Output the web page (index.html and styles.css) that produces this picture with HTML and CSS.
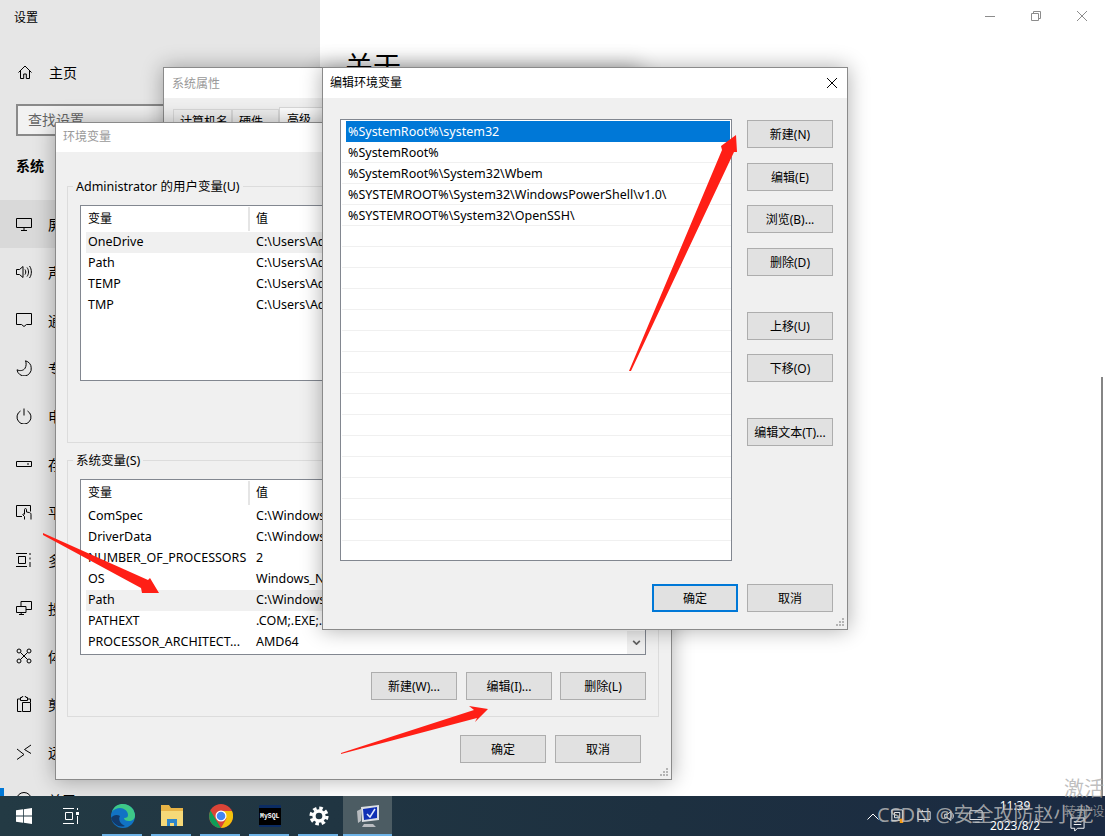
FILE: index.html
```html
<!DOCTYPE html>
<html lang="zh-CN">
<head>
    <meta charset="UTF-8">
    <title>设置</title>
    <link rel="stylesheet" href="styles.css">
</head>
<body>
<div class="screen">
    <div class="settings">
        <aside class="sidebar">
            <div class="app-title">设置</div>
            <div class="home-row">
                <svg class="icon" viewBox="0 0 16 16"><path d="M1.5 8.5 8 2l6.5 6.5M3.5 7v7.5h3.2v-4.5h2.6v4.5h3.2V7"/></svg>
                <span>主页</span>
            </div>
            <div class="search">查找设置</div>
            <div class="section">系统</div>
            <ul class="nav">
                <li class="nav-item hover">
                    <svg class="icon" viewBox="0 0 16 16"><path d="M.5 2.5h15v9H.5zM8 11.5v3M5 14.5h6"/></svg>
                    <span>屏幕</span>
                </li>
                <li class="nav-item">
                    <svg class="icon" viewBox="0 0 16 16"><path d="M.5 5.5h3L7 2.5v11l-3.500-3h-3zM9 5.500c1 1.500 1 3.500 0 5M11 3.500c2 2.500 2 6.500 0 9M13.500 2c2.500 3.500 2.500 8.500 0 12"/></svg>
                    <span>声音</span>
                </li>
                <li class="nav-item">
                    <svg class="icon" viewBox="0 0 16 16"><path d="M.5 1.500h15v11h-5l-2.500 2-2.500-2h-5z"/></svg>
                    <span>通知和操作</span>
                </li>
                <li class="nav-item">
                    <svg class="icon" viewBox="0 0 16 16"><path d="M9.500 .8c3.500 1 5.700 3.700 5.700 7a7 7 0 0 1-14.200 2c3 1.500 6.500 .8 8-1.500 1.300-2.200 1.500-5 .5-7.500z"/></svg>
                    <span>专注助手</span>
                </li>
                <li class="nav-item">
                    <svg class="icon" viewBox="0 0 16 16"><path d="M4.500 3a7 7 0 1 0 7 0M8 .5v7"/></svg>
                    <span>电源和睡眠</span>
                </li>
                <li class="nav-item">
                    <svg class="icon" viewBox="0 0 16 16"><path d="M.5 5.500h15v5H.5zM11 8h2"/></svg>
                    <span>存储</span>
                </li>
                <li class="nav-item">
                    <svg class="icon" viewBox="0 0 16 16"><path d="M6 12.500H.5v-11h14v6M8.500 15.500v-3L7 11c-.5-1 .5-1.500 1.500-.8V5.500c0-1.200 2-1.200 2 0V8l3 .6c1.500 .4 1.500 1.400 1.500 2.400v4.500"/></svg>
                    <span>平板</span>
                </li>
                <li class="nav-item">
                    <svg class="icon" viewBox="0 0 16 16"><path d="M0 1.500h11M0 14.500h11M2.500 4.500h7v7h-7zM14 1v2M14 5.500v2M14 10v5"/></svg>
                    <span>多任务</span>
                </li>
                <li class="nav-item">
                    <svg class="icon" viewBox="0 0 16 16"><path d="M5 6V1.500h10.500v8H10M.5 6.500h9.500v6H.5zM3 14.500h5M5.200 12.500v2"/></svg>
                    <span>投影到此电脑</span>
                </li>
                <li class="nav-item">
                    <svg class="icon" viewBox="0 0 16 16"><circle cx="3" cy="3" r="2"/><circle cx="13" cy="3" r="2"/><circle cx="3" cy="13" r="2"/><circle cx="13" cy="13" r="2"/><path d="M4.500 4.500l7 7M11.500 4.500l-7 7"/></svg>
                    <span>体验共享</span>
                </li>
                <li class="nav-item">
                    <svg class="icon" viewBox="0 0 16 16"><path d="M5 3H1.500v12.500h4M11 3h3.500v3M4.500 4.500V1.500h1.500a2 2 0 0 1 4 0h1.500v3zM6.500 6.500h8v9h-8z"/></svg>
                    <span>剪贴板</span>
                </li>
                <li class="nav-item">
                    <svg class="icon" viewBox="0 0 16 16"><path d="M1 5l7 5.500L1 15.500M15 1L8.500 5.500l6.500 4"/></svg>
                    <span>远程桌面</span>
                </li>
                <li class="nav-item current">
                    <svg class="icon" viewBox="0 0 16 16"><circle cx="8" cy="8" r="7.500"/></svg>
                    <span>关于</span>
                </li>
            </ul>
        </aside>
        <main class="content">
            <div class="win-controls">
                <svg viewBox="0 0 12 12"><path d="M1 6.500h10"/></svg>
                <svg viewBox="0 0 12 12"><path d="M1.500 3.500h7v7h-7zM3.500 3.500v-2h7v7h-2"/></svg>
                <svg viewBox="0 0 12 12"><path d="M1 1l10 10M11 1L1 11"/></svg>
            </div>
            <h1 class="page-title">关于</h1>
            <div class="page-scroll"></div>
        </main>
    </div>

    <div class="dialog dialog-sys">
        <div class="dialog-title inactive">系统属性</div>
        <div class="tabs">
            <div class="tab">计算机名</div>
            <div class="tab tab-hw">硬件</div>
            <div class="tab tab-active">高级</div>
        </div>
    </div>

    <div class="dialog dialog-env">
        <div class="dialog-title inactive">环境变量</div>
        <div class="env-body">
            <section class="group">
                <span class="legend">Administrator 的用户变量(U)</span>
                <div class="var-list">
                    <div class="var-head"><span class="col-name">变量</span><span class="col-val">值</span></div>
                    <div class="var-row shaded"><span class="col-name">OneDrive</span><span class="col-val">C:\Users\Administrator\OneDrive</span></div>
                    <div class="var-row"><span class="col-name">Path</span><span class="col-val">C:\Users\Administrator\AppData\Local</span></div>
                    <div class="var-row"><span class="col-name">TEMP</span><span class="col-val">C:\Users\Administrator\AppData\Local</span></div>
                    <div class="var-row"><span class="col-name">TMP</span><span class="col-val">C:\Users\Administrator\AppData\Local</span></div>
                </div>
            </section>
            <section class="group group-sys">
                <span class="legend">系统变量(S)</span>
                <div class="var-list">
                    <div class="var-head"><span class="col-name">变量</span><span class="col-val">值</span></div>
                    <div class="var-row"><span class="col-name">ComSpec</span><span class="col-val">C:\Windows\system32\cmd.exe</span></div>
                    <div class="var-row"><span class="col-name">DriverData</span><span class="col-val">C:\Windows\System32\Drivers\DriverData</span></div>
                    <div class="var-row"><span class="col-name">NUMBER_OF_PROCESSORS</span><span class="col-val">2</span></div>
                    <div class="var-row"><span class="col-name">OS</span><span class="col-val">Windows_NT</span></div>
                    <div class="var-row shaded"><span class="col-name">Path</span><span class="col-val">C:\Windows\system32;C:\Windows</span></div>
                    <div class="var-row"><span class="col-name">PATHEXT</span><span class="col-val">.COM;.EXE;.BAT;.CMD;.VBS;.VBE</span></div>
                    <div class="var-row"><span class="col-name">PROCESSOR_ARCHITECT...</span><span class="col-val">AMD64</span></div>
                    <div class="list-arrow">
                        <svg viewBox="0 0 10 6"><path d="M1 1l4 4 4-4"/></svg>
                    </div>
                </div>
                <div class="btn-row group-btns">
                    <button class="btn">新建(W)...</button>
                    <button class="btn">编辑(I)...</button>
                    <button class="btn">删除(L)</button>
                </div>
            </section>
            <div class="btn-row env-foot">
                <button class="btn">确定</button>
                <button class="btn">取消</button>
            </div>
        </div>
        <svg class="grip" viewBox="0 0 9 9"><path d="M6 0h2v2H6zM3 3h2v2H3zM6 3h2v2H6zM0 6h2v2H0zM3 6h2v2H3zM6 6h2v2H6z"/></svg>
    </div>

    <div class="dialog dialog-edit">
        <div class="dialog-title">
            编辑环境变量
            <svg class="dialog-close" viewBox="0 0 12 12"><path d="M1 1l10 10M11 1L1 11"/></svg>
        </div>
        <div class="edit-body">
            <div class="path-list">
                <div class="path-row selected">%SystemRoot%\system32</div>
                <div class="path-row">%SystemRoot%</div>
                <div class="path-row">%SystemRoot%\System32\Wbem</div>
                <div class="path-row">%SYSTEMROOT%\System32\WindowsPowerShell\v1.0\</div>
                <div class="path-row">%SYSTEMROOT%\System32\OpenSSH\</div>
                <div class="path-row"></div><div class="path-row"></div><div class="path-row"></div>
                <div class="path-row"></div><div class="path-row"></div><div class="path-row"></div>
                <div class="path-row"></div><div class="path-row"></div><div class="path-row"></div>
                <div class="path-row"></div><div class="path-row"></div><div class="path-row"></div>
                <div class="path-row"></div><div class="path-row"></div><div class="path-row"></div>
            </div>
            <div class="edit-btns">
                <button class="btn">新建(N)</button>
                <button class="btn nudge">编辑(E)</button>
                <button class="btn">浏览(B)...</button>
                <button class="btn nudge">删除(D)</button>
                <button class="btn far">上移(U)</button>
                <button class="btn">下移(O)</button>
                <button class="btn far">编辑文本(T)...</button>
            </div>
        </div>
        <div class="btn-row edit-foot">
            <button class="btn default">确定</button>
            <button class="btn">取消</button>
        </div>
        <svg class="grip" viewBox="0 0 9 9"><path d="M6 0h2v2H6zM3 3h2v2H3zM6 3h2v2H6zM0 6h2v2H0zM3 6h2v2H3zM6 6h2v2H6z"/></svg>
    </div>

    <!-- red annotation arrows -->
    <svg class="arrows" viewBox="0 0 1105 836">
        <polygon points="629,371 722,150 721,146 736,135 737,152 734,152 631,371"/>
        <polygon points="43,533 148,580 150,578 159,593 142,593 141,588 43,535"/>
        <polygon points="341,753 474,710 469,706 488,709 475,722 477,718 341,754"/>
    </svg>

    <footer class="taskbar">
        <div class="task-item task-start">
            <svg viewBox="0 0 16 16"><path fill="#fff" d="M0 2.300 7 1.300V7.600H0zM7.800 1.200 16 0V7.600H7.800zM0 8.400H7V14.700L0 13.700zM7.800 8.400H16V16L7.800 14.800z"/></svg>
        </div>
        <div class="task-item task-view">
            <svg viewBox="0 0 16 16" fill="none" stroke="#fff"><path d="M0 .5h11M0 15.500h11M2.500 4.500h7v7h-7zM14.500 0v2"/><path stroke-width="3" d="M13 5.500h3"/><path d="M14.500 8v8"/></svg>
        </div>
        <div class="task-item running">
            <svg class="app" viewBox="0 0 24 24">
                <circle cx="12" cy="12" r="12" fill="#1173c4"/>
                <path fill="#3ec887" d="M12 0a12 12 0 0 1 12 12c0 3-3 5-6 5-3 0-5-1-5-3 3 0 4-1 4-3 0-4-4-7-8-7-3 0-6 1-8 4C3 2 7 0 12 0z"/>
                <path fill="#123a6b" d="M9 12c-2 3 0 8 5 10-6 2-12-2-14-8 2-3 6-4 9-2z"/>
            </svg>
        </div>
        <div class="task-item running">
            <svg class="app" viewBox="0 0 24 24">
                <path fill="#e8b446" d="M1 1h8l2 3h12v18H1z"/>
                <path fill="#f6d978" d="M1 7h22v15H1z"/>
                <path fill="#2f86c9" d="M7 15h10v7h-3v-3h-4v3H7z"/>
            </svg>
        </div>
        <div class="task-item running">
            <svg class="app" viewBox="0 0 24 24">
                <circle cx="12" cy="12" r="12" fill="#db4437"/>
                <path fill="#0f9d58" d="M1.500 6.500 7 16l5 8a12 12 0 0 1-10.500-17.500z"/>
                <path fill="#f4c20d" d="M12 24l5.500-9.500L12 7h11a12 12 0 0 1-11 17z"/>
                <circle cx="12" cy="12" r="5.500" fill="#fff"/>
                <circle cx="12" cy="12" r="4.300" fill="#4285f4"/>
            </svg>
        </div>
        <div class="task-item running">
            <svg class="app" viewBox="0 0 24 24">
                <rect x="1" y="1" width="22" height="22" rx="1" fill="#0b2c63"/>
                <rect x="1" y="4" width="22" height="17" fill="#000"/>
                <text x="2" y="14" font-size="6.500" font-family="Liberation Mono, monospace" font-weight="700" fill="#fff">MySQL</text>
            </svg>
        </div>
        <div class="task-item running">
            <svg class="app gear" viewBox="0 0 24 24" fill="none" stroke="#fff">
                <circle cx="12" cy="12" r="6" stroke-width="4"/>
                <circle cx="12" cy="12" r="9.500" stroke-width="4" stroke-dasharray="4.200 3.260"/>
            </svg>
        </div>
        <div class="task-item running active">
            <svg class="app" viewBox="0 0 24 24">
                <path fill="#b9bcc0" d="M1 7l4-2v12l-3 2zM8 20l9 0 3 3H6z"/>
                <path fill="#dcdfe3" d="M5 3 23 1v15L6 18z"/>
                <path fill="#0f2fb5" d="M7 5 21 3v11L8 16z"/>
                <path fill="none" stroke="#dfe8ff" stroke-width="1.500" d="M11 10l3 3 5-8"/>
            </svg>
        </div>
        <div class="tray">
            <svg class="caret" viewBox="0 0 12 7" fill="none" stroke="#fff"><path d="M.5 6.500 6 1l5.500 5.500"/></svg>
            <svg class="tray-icon" viewBox="0 0 16 16" fill="none" stroke="#fff"><path d="M1 1h12v12H1zM4 4h6v6H4z"/><path fill="#f39c12" stroke="none" d="M10 11h4v5h-4z"/></svg>
            <svg class="tray-icon" viewBox="0 0 16 16" fill="none" stroke="#fff"><path d="M1 3h14v9H1zM8 12v3M6 1v2"/></svg>
            <svg class="tray-icon" viewBox="0 0 16 16" fill="none" stroke="#fff"><path d="M2 6h3l4-3v10l-4-3H2zM11 5c1 2 1 4 0 6"/></svg>
            <svg class="tray-icon" viewBox="0 0 16 16" fill="none" stroke="#fff"><path d="M1 2h14v10H1zM4 15h8"/></svg>
            <div class="clock"><span>11:39</span><span>2023/8/2</span></div>
            <svg class="tray-note" viewBox="0 0 16 16" fill="none" stroke="#fff"><path d="M1 1h14v11H8l-3 3v-3H1z"/><path d="M4 5h8M4 8h8"/></svg>
        </div>
    </footer>

    <div class="csdn-mark">CSDN @安全攻防赵小龙</div>
    <div class="activate">
        <div class="activate-big">激活 Windows</div>
        <div class="activate-small">转到“设置”以激活 Windows。</div>
    </div>
</div>
</body>
</html>
```
FILE: styles.css
```css
* {
    margin: 0;
    padding: 0;
    box-sizing: border-box;
}

html, body {
    width: 1105px;
    height: 836px;
    overflow: hidden;
    background: #fff;
}

body {
    font-family: "Noto Sans", "Noto Sans CJK SC", sans-serif;
    font-size: 12px;
    color: #000;
}

.screen {
    position: relative;
    width: 1105px;
    height: 836px;
    overflow: hidden;
    display: flex;
    flex-direction: column;
}

/* settings window behind the dialogs */
.settings {
    display: flex;
    height: 796px;
    flex: none;
    overflow: hidden;
}

.sidebar {
    width: 320px;
    flex: none;
    background: #e6e6e6;
}

.app-title {
    height: 34px;
    line-height: 35px;
    padding-left: 14px;
}

.home-row {
    display: flex;
    align-items: center;
    height: 34px;
    margin-top: 21px;
    padding-left: 17px;
    font-size: 14px;
    gap: 16px;
}

.icon {
    width: 16px;
    height: 16px;
    flex: none;
    fill: none;
    stroke: #000;
    stroke-width: 1;
}

.search {
    width: 288px;
    height: 32px;
    margin: 15px 0 0 16px;
    padding-left: 10px;
    line-height: 27px;
    border: 2px solid #8a8a8a;
    background: #f2f2f2;
    color: #666;
    font-size: 14px;
}

.section {
    height: 64px;
    padding: 18px 0 0 16px;
    line-height: 24px;
    font-size: 14px;
    font-weight: 700;
}

.nav {
    list-style: none;
}

.nav-item {
    position: relative;
    display: flex;
    align-items: center;
    gap: 16px;
    height: 48px;
    padding-left: 16px;
    font-size: 14px;
}

.nav-item.hover {
    background: #d9d9d9;
}

.nav-item.current::before {
    content: "";
    position: absolute;
    left: 0;
    top: 12px;
    width: 4px;
    height: 24px;
    background: #0078d7;
}

.content {
    position: relative;
    flex: 1;
    background: #fff;
}

.win-controls {
    display: flex;
    gap: 34px;
    justify-content: flex-end;
    padding: 10px 17px 0 0;
}

.win-controls svg {
    width: 12px;
    height: 12px;
    fill: none;
    stroke: #8c8c8c;
}

.page-title {
    margin: 24px 0 0 25px;
    font-size: 28px;
    font-weight: 400;
    line-height: 40px;
}

.page-scroll {
    position: absolute;
    right: 2px;
    top: 377px;
    bottom: 0;
    width: 2px;
    background: #858585;
}

/* dialogs */
.dialog {
    position: absolute;
    background: #f0f0f0;
    border: 1px solid #8a8a8a;
    box-shadow: 0 0 20px rgba(0, 0, 0, 0.32);
}

.dialog-sys {
    left: 163px;
    top: 67px;
    width: 478px;
    height: 560px;
}

.dialog-env {
    left: 55px;
    top: 122px;
    width: 617px;
    height: 658px;
}

.dialog-edit {
    left: 322px;
    top: 67px;
    width: 526px;
    height: 563px;
}

.dialog-title {
    position: relative;
    height: 30px;
    line-height: 30px;
    padding-left: 7px;
    background: #fff;
}

.dialog-title.inactive {
    color: #999;
}

.dialog-sys .dialog-title {
    padding-left: 8px;
    line-height: 31px;
}

.dialog-env .dialog-title {
    height: 29px;
    line-height: 28px;
}

.dialog-close {
    position: absolute;
    right: 9px;
    top: 9px;
    width: 12px;
    height: 12px;
    fill: none;
    stroke: #000;
}

.grip {
    position: absolute;
    right: 2px;
    bottom: 2px;
    width: 9px;
    height: 9px;
    fill: #b4b4b4;
}

.tabs {
    display: flex;
    align-items: flex-end;
    height: 24px;
    margin: 9px 0 0 9px;
}

.tab {
    height: 22px;
    width: 59px;
    padding-left: 6px;
    line-height: 24px;
    border: 1px solid #d9d9d9;
    border-bottom: none;
}

.tab-hw {
    width: 47px;
}

.tab-active {
    height: 24px;
    width: 60px;
    padding-left: 7px;
    background: #fff;
}

.env-body {
    padding: 34px 12px 0 11px;
}

.group {
    position: relative;
    height: 257px;
    padding: 18px 12px 0 12px;
    border: 1px solid #dcdcdc;
}

.group-sys {
    margin-top: 17px;
}

.legend {
    position: absolute;
    left: 5px;
    top: -8px;
    padding: 0 3px;
    line-height: 16px;
    font-size: 12.5px;
    background: #f0f0f0;
}

.var-list {
    position: relative;
    height: 176px;
    padding: 1px 0 0 5px;
    overflow: hidden;
    background: #fff;
    border: 1px solid #828790;
}

.var-head,
.var-row {
    display: flex;
    white-space: nowrap;
}

.var-head {
    height: 25px;
    line-height: 24px;
}

.var-head .col-name {
    width: 164px;
    height: 24px;
    border-right: 2px solid #e5e5e5;
}

.var-head .col-val {
    padding-left: 6px;
}

.var-row {
    height: 21px;
    line-height: 20px;
    font-size: 12.5px;
}

.var-row.shaded {
    background: #f0f0f0;
}

.col-name {
    flex: none;
    width: 170px;
    padding-left: 2px;
    overflow: hidden;
}

.list-arrow {
    position: absolute;
    right: 0;
    bottom: 0;
    display: flex;
    align-items: center;
    justify-content: center;
    width: 18px;
    height: 23px;
    background: #f0f0f0;
}

.list-arrow svg {
    width: 9px;
    height: 5px;
    fill: none;
    stroke: #606060;
    stroke-width: 2;
}

/* buttons */
.btn {
    flex: none;
    width: 86px;
    height: 28px;
    font: inherit;
    color: #000;
    background: #e1e1e1;
    border: 1px solid #adadad;
}

.btn.default {
    border: 2px solid #0078d7;
}

.btn-row {
    display: flex;
    justify-content: flex-end;
    gap: 9px;
}

.group-btns {
    margin-top: 17px;
    gap: 8px;
}

.group-btns .btn:first-child {
    margin-right: 1px;
}

.env-foot {
    margin-top: 18px;
    padding-right: 18px;
}

/* edit dialog */
.edit-body {
    display: flex;
    gap: 15px;
    padding: 21px 0 0 17px;
}

.path-list {
    width: 392px;
    height: 442px;
    padding: 1px 0 0 1px;
    overflow: hidden;
    background: #fff;
    border: 1px solid #828790;
}

.path-row {
    height: 21px;
    padding-left: 6px;
    line-height: 21px;
    font-size: 12.5px;
    border-bottom: 1px solid #f0f0f0;
}

.path-row.selected {
    margin: 0 1px 0 4px;
    padding-left: 2px;
    background: #0078d7;
    color: #fff;
    border-bottom: none;
}

.edit-btns {
    display: flex;
    flex-direction: column;
    gap: 14px;
    padding-top: 1px;
}

.edit-btns .nudge {
    margin-top: 1px;
}

.edit-btns .far {
    margin-top: 22px;
}

.edit-foot {
    margin-top: 23px;
    padding-right: 14px;
}

/* annotations */
.arrows {
    position: absolute;
    left: 0;
    top: 0;
    width: 1105px;
    height: 836px;
    fill: #ff1f16;
    pointer-events: none;
}

/* taskbar */
.taskbar {
    position: relative;
    display: flex;
    height: 40px;
    flex: none;
    background: linear-gradient(90deg, #233a44 0%, #1d3040 60%, #1b2a42 100%);
}

.task-item {
    position: relative;
    display: flex;
    align-items: center;
    justify-content: center;
    width: 49px;
    height: 40px;
}

.task-item svg {
    width: 16px;
    height: 16px;
}

.task-item .app {
    width: 24px;
    height: 24px;
}

.task-item .gear {
    width: 20px;
    height: 20px;
}

.task-start {
    width: 48px;
}

.task-view {
    width: 46px;
    margin-right: 4px;
}

.running::after {
    content: "";
    position: absolute;
    left: 4px;
    right: 5px;
    bottom: 0;
    height: 2px;
    background: #6cb2e6;
}

.active {
    background: #4c5c63;
}

.active::after {
    left: 0;
    right: 0;
}

.tray {
    position: absolute;
    left: 867px;
    top: 0;
    right: 0;
    height: 40px;
    display: flex;
    align-items: center;
    color: #fff;
}

.tray .caret {
    width: 12px;
    height: 7px;
    margin-right: 12px;
}

.tray-icon {
    width: 14px;
    height: 14px;
    margin-right: 12px;
}

.clock {
    display: flex;
    flex-direction: column;
    align-items: center;
    width: 40px;
    line-height: 20px;
}

.tray-note {
    width: 15px;
    height: 15px;
    margin-left: 35px;
    margin-top: 16px;
}

/* overlaid marks on the picture */
.csdn-mark {
    position: absolute;
    left: 877px;
    top: 800px;
    font-size: 20px;
    line-height: 30px;
    white-space: nowrap;
    color: rgba(190, 190, 190, 0.8);
}

.activate {
    position: absolute;
    left: 1064px;
    top: 776px;
    white-space: nowrap;
    color: rgba(170, 170, 170, 0.75);
}

.activate-big {
    font-size: 20px;
    line-height: 26px;
}

.activate-small {
    font-size: 12px;
    line-height: 20px;
}
```
